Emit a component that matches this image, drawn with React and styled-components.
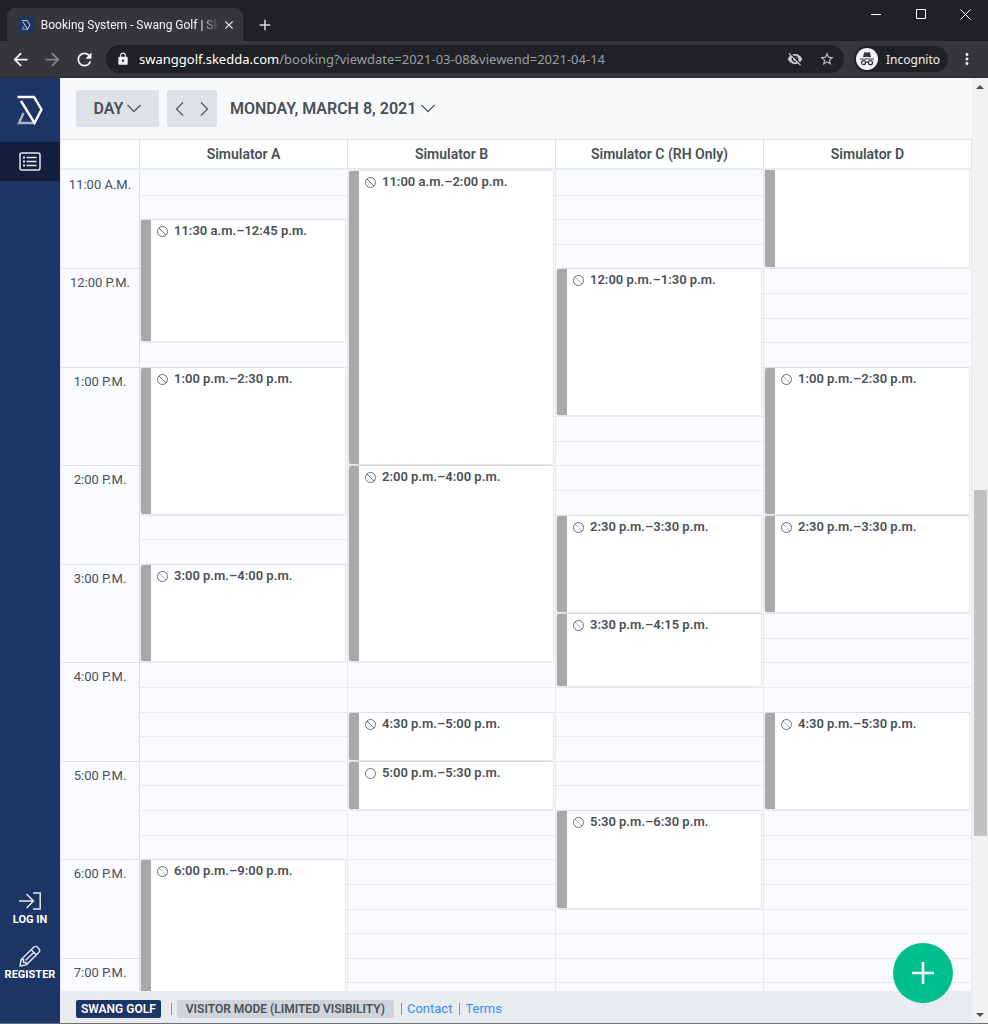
import React, { useState } from 'react'
import styled, { createGlobalStyle } from 'styled-components'
import {
  MdArrowBack,
  MdArrowForward,
  MdRefresh,
  MdLock,
  MdVisibilityOff,
  MdStarBorder,
  MdMoreVert,
  MdClose,
  MdAdd,
} from 'react-icons/md'

/**** Styles ****/
const GlobalStyle = createGlobalStyle`
  * {
    box-sizing: border-box;
  }
  body {
    margin: 0;
    font-family: Roboto, 'Noto Sans', sans-serif;
    font-size: 13px;
    color: #495057;
  }
  button {
    margin: 0;
    padding: 0;
    border: 0;
    background: none;
    font: inherit;
    color: inherit;
    cursor: pointer;
  }
  a {
    text-decoration: none;
  }
  svg {
    display: block;
    flex: none;
  }
`

const Window = styled.div`
  height: 100vh;
  display: flex;
  flex-direction: column;
  overflow: hidden;
  border-bottom: 1px solid #6e6f71;
`

/* browser frame */
const TabStrip = styled.header`
  flex: none;
  display: flex;
  align-items: flex-end;
  height: 41px;
  padding-left: 7px;
  background: #202124;
  color: #dadce0;
`
const Tab = styled.div`
  display: flex;
  align-items: center;
  width: 236px;
  height: 33px;
  padding: 0 5px 0 12px;
  border-radius: 8px 8px 0 0;
  background: #35363a;
  color: #f1f3f4;
`
const Favicon = styled.span`
  display: grid;
  place-items: center;
  width: 16px;
  height: 16px;
  margin-right: 7px;
  background: #1d3564;
`
const TabTitle = styled.span`
  flex: 1;
  white-space: nowrap;
  font-size: 12px;
  line-height: 18px;
  mask-image: linear-gradient(to right, #000 160px, transparent 178px);
`
const TabButton = styled.button`
  display: grid;
  place-items: center;
  width: 20px;
  height: 33px;
`
const NewTab = styled(TabButton)`
  margin-left: 12px;
`
const WindowControls = styled.div`
  display: flex;
  align-self: flex-start;
  margin-left: auto;
`
const WindowButton = styled.button`
  display: grid;
  place-items: center;
  width: 45px;
  height: 28px;
  color: #fff;
`
const BrowserBar = styled.div`
  flex: none;
  display: flex;
  align-items: center;
  height: 37px;
  padding: 0 12px 0 10px;
  background: #35363a;
  border-bottom: 1px solid #2b2c2f;
  color: #f1f3f4;
  font-family: 'Noto Sans', 'Open Sans', sans-serif;
`
const NavButton = styled.button`
  width: 21px;
  height: 21px;
  margin-right: 11px;
  color: ${(props) => (props.$dim ? '#85868a' : '#f1f3f4')};
`
const AddressBar = styled.div`
  flex: 1;
  min-width: 0;
  display: flex;
  align-items: center;
  height: 28px;
  padding: 0 9px 0 10px;
  border-radius: 14px;
  background: #202124;
`
const Url = styled.span`
  flex: 1;
  min-width: 0;
  overflow: hidden;
  margin-left: 9px;
  white-space: nowrap;
  color: #9aa0a6;
`
const Host = styled.span`
  color: #fff;
`
const BarIcon = styled.button`
  margin-left: 16px;
  color: #c5c7ca;
`
const Profile = styled.button`
  display: flex;
  align-items: center;
  gap: 8px;
  height: 26px;
  margin: 0 10px;
  padding: 0 8px 0 2px;
  border-radius: 13px;
  background: #202124;
  font-size: 12px;
`

/* page */
const Page = styled.div`
  flex: 1;
  min-height: 0;
  display: flex;
`
const Sidebar = styled.nav`
  flex: none;
  display: flex;
  flex-direction: column;
  width: 60px;
  padding-bottom: 41px;
  background: #1d3564;
`
const Logo = styled.a`
  display: grid;
  place-items: center;
  height: 64px;
`
const ActiveItem = styled.button`
  display: grid;
  place-items: center;
  height: 39px;
  margin-bottom: auto;
  background: #131f3c;
`
const SideLink = styled.a`
  display: flex;
  flex-direction: column;
  align-items: center;
  gap: 1px;
  margin-top: 18px;
  color: #fff;
  font-size: 11px;
  line-height: 14px;
  font-weight: 700;
`
const Main = styled.main`
  position: relative;
  flex: 1;
  min-width: 0;
  display: flex;
  flex-direction: column;
  border-left: 1px solid #e9ecef;
`
const Toolbar = styled.div`
  flex: none;
  display: flex;
  align-items: center;
  height: 61px;
  padding-left: 15px;
  background: #f8f9fb;
  font-size: 16px;
  font-weight: 600;
`
const ViewButton = styled.button`
  display: flex;
  align-items: center;
  justify-content: center;
  gap: 4px;
  width: 83px;
  height: 37px;
  border-radius: 2px;
  background: #dee2e6;
`
const Pager = styled.div`
  display: flex;
  width: 50px;
  height: 37px;
  margin: 0 13px 0 8px;
  border-radius: 2px;
  background: #dee2e6;
`
const PagerButton = styled.button`
  flex: 1;
  display: grid;
  place-items: center;
`
const DateButton = styled.button`
  display: flex;
  align-items: center;
  gap: 5px;
`
const Columns = styled.div`
  display: grid;
  grid-template-columns: 79px repeat(4, minmax(0, 1fr));
`
const ColumnHeads = styled(Columns)`
  flex: none;
  height: 31px;
  border-top: 1px solid #dee2e6;
  border-bottom: 2px solid #e9ecef;
  background: #fff;
  font-size: 14px;
  line-height: 28px;
  font-weight: 600;
  text-align: center;
`
const ColumnHead = styled.div`
  border-right: 1px solid #dee2e6;
`
const Schedule = styled.div`
  flex: 1;
  min-height: 0;
  overflow: hidden;
  background: #fafbff;
`
const Hours = styled.div`
  display: grid;
  grid-template-rows: repeat(34, minmax(0, 1fr));
  height: 837px;
  border-right: 1px solid #dee2e6;
`
const Hour = styled.div`
  grid-row: ${(props) => props.$row} / span 4;
  padding-top: 6px;
  border-top: 1px solid ${(props) => (props.$row === 1 ? 'transparent' : '#dee2e6')};
  line-height: 16px;
  text-align: center;
`
const Lane = styled(Hours)`
  grid-template-columns: minmax(0, 1fr);
  border-color: #e9ecef;
`
const Slot = styled.div`
  grid-row: ${(props) => props.$row};
  grid-column: 1;
  border-top: 1px solid ${(props) => (props.$row === 1 ? 'transparent' : '#e9ecf0')};
`
const Booking = styled.div`
  grid-row: ${(props) => props.$from} / ${(props) => props.$to};
  grid-column: 1;
  display: flex;
  align-items: flex-start;
  gap: 5px;
  margin: ${(props) => (props.$cut ? '0' : '1px')} 2px 1px 1px;
  padding: 3px 4px 0 5px;
  border-left: 10px solid #a9a9a9;
  border-radius: ${(props) => (props.$cut ? '0 0 2px 2px' : '2px')};
  background: #fff;
  box-shadow: 0 0 2px #b4b8bc;
  line-height: 16px;
  font-weight: 600;
`
const StatusIcon = styled.svg`
  width: 13px;
  height: 13px;
  margin-top: 2px;
  fill: none;
  stroke: #6c7075;
`
const Footer = styled.footer`
  flex: none;
  display: flex;
  align-items: center;
  height: 32px;
  padding: 4px 0 0 15px;
  background: #e9ecef;
  line-height: 18px;
`
const Tag = styled.span`
  padding: 0 9px;
  border-radius: 2px;
  background: #ced4da;
  font-size: 12px;
  font-weight: 600;
`
const VenueTag = styled(Tag)`
  padding: 0 5px;
  background: #1d3564;
  color: #fff;
`
const Divider = styled.span`
  width: 1px;
  height: 12px;
  margin: 0 5px 0 ${(props) => (props.$wide ? '10px' : '7px')};
  background: #868e96;
`
const FooterLink = styled.a`
  color: #3d8bfd;
`
const AddButton = styled.button`
  position: absolute;
  right: 19px;
  bottom: 20px;
  display: grid;
  place-items: center;
  width: 60px;
  height: 60px;
  border-radius: 50%;
  background: #00bf8e;
`
const Scrollbar = styled.div`
  flex: none;
  display: flex;
  flex-direction: column;
  align-items: center;
  width: 16px;
  background: #f1f1f1;
`
const ScrollArrow = styled.button`
  display: grid;
  place-items: center;
  width: 100%;
  height: 17px;
`
const Track = styled.div`
  flex: ${(props) => props.$size} 1 0;
`
const Thumb = styled(Track)`
  width: 13px;
  background: #c1c1c1;
`

/**** Icons ****/
const SkeddaLogo = ({ size }) => (
  <svg width={size} height={size} viewBox="0 0 30 30" fill="none">
    <path d="M8.5 18L4 28h15.5" stroke="#a9b4c9" strokeWidth="2.4" />
    <path d="M2.500 2H19l7.500 12.500-7 13.500L6 6" stroke="#fff" strokeWidth="2.4" />
  </svg>
)

const Chevron = ({ d, width = 14, height = 9 }) => (
  <svg width={width} height={height} viewBox={`0 0 ${width} ${height}`} fill="none" stroke="#555b61" strokeWidth="1.3">
    <path d={d} />
  </svg>
)

const ListIcon = () => (
  <svg width="22" height="19" viewBox="0 0 22 19" fill="none" stroke="#e3e7ee" strokeWidth="1.5">
    <rect x="1" y="1" width="20" height="17" rx="2" />
    <path d="M7.5 5.5h10M7.5 9.5h10M7.5 13.5h10" />
    <path d="M4 5.5h2M4 9.5h2M4 13.5h2" strokeWidth="2" />
  </svg>
)

const LoginIcon = () => (
  <svg width="24" height="22" viewBox="0 -2 24 22" fill="none" stroke="#e3e7ee" strokeWidth="1.5">
    <path d="M1 9h14.5M8.500 2l7 7-7 7M15 1h7.200v16H15" />
  </svg>
)

const PencilIcon = () => (
  <svg width="22" height="22" viewBox="0 0 23 23" fill="none" stroke="#e3e7ee" strokeWidth="1.5" strokeLinejoin="round">
    <path d="M1 22l1.200-6.500L15.500 2.200c1-1 2.600-1 3.600 0l1.700 1.700c1 1 1 2.600 0 3.600L7.500 20.800z" />
    <path d="M12.800 5l5.200 5.200M2.300 15.500h2.500v2.700h2.700v2.500M7 16l8-8" />
  </svg>
)

const IncognitoIcon = () => (
  <svg width="22" height="22" viewBox="0 0 22 22">
    <circle cx="11" cy="11" r="11" fill="#f1f3f4" />
    <path d="M7 9l1.100-4.300c.1-.5.500-.7 1-.5l1.900.5 1.900-.5c.5-.2.900 0 1 .5L15 9z" fill="#35363a" />
    <path d="M4 11h14M9.500 14.500c1-.7 2-.7 3 0" stroke="#35363a" strokeWidth="1.2" fill="none" />
    <circle cx="7.500" cy="14.700" r="2" stroke="#35363a" strokeWidth="1.2" fill="none" />
    <circle cx="14.500" cy="14.700" r="2" stroke="#35363a" strokeWidth="1.2" fill="none" />
  </svg>
)

/**** Variables ****/
const hours = ['11:00 A.M.', '12:00 P.M.', '1:00 P.M.', '2:00 P.M.', '3:00 P.M.', '4:00 P.M.', '5:00 P.M.', '6:00 P.M.', '7:00 P.M.']

// rows are quarter hours, row 1 is 11:00 a.m.
const slots = Array.from({ length: 34 }, (_, key) => key + 1)

const spaces = [
  {
    name: 'Simulator A',
    bookings: [
      { from: 3, to: 8, label: '11:30 a.m.–12:45 p.m.' },
      { from: 9, to: 15, label: '1:00 p.m.–2:30 p.m.' },
      { from: 17, to: 21, label: '3:00 p.m.–4:00 p.m.', slash: 0.5 },
      { from: 29, to: 35, label: '6:00 p.m.–9:00 p.m.', slash: 0.5 },
    ],
  },
  {
    name: 'Simulator B',
    bookings: [
      { from: 1, to: 13, label: '11:00 a.m.–2:00 p.m.' },
      { from: 13, to: 21, label: '2:00 p.m.–4:00 p.m.' },
      { from: 23, to: 25, label: '4:30 p.m.–5:00 p.m.' },
      { from: 25, to: 27, label: '5:00 p.m.–5:30 p.m.', slash: 0 },
    ],
  },
  {
    name: 'Simulator C (RH Only)',
    bookings: [
      { from: 5, to: 11, label: '12:00 p.m.–1:30 p.m.', slash: 0.5 },
      { from: 15, to: 19, label: '2:30 p.m.–3:30 p.m.', slash: 0.5 },
      { from: 19, to: 22, label: '3:30 p.m.–4:15 p.m.', slash: 0.5 },
      { from: 27, to: 31, label: '5:30 p.m.–6:30 p.m.', slash: 0.5 },
    ],
  },
  {
    name: 'Simulator D',
    bookings: [
      { from: 1, to: 5 },
      { from: 9, to: 15, label: '1:00 p.m.–2:30 p.m.', slash: 0.5 },
      { from: 15, to: 19, label: '2:30 p.m.–3:30 p.m.', slash: 0.5 },
      { from: 23, to: 27, label: '4:30 p.m.–5:30 p.m.', slash: 0.5 },
    ],
  },
]

/**** Components ****/
const BookingCard = ({ from, to, label, slash = 1 }) => (
  <Booking $from={from} $to={to} $cut={!label}>
    {label && (
      <>
        <StatusIcon viewBox="0 0 13 13">
          <circle cx="6.5" cy="6.5" r="5" />
          <path d="M3 3l7 7" strokeOpacity={slash} />
        </StatusIcon>
        {label}
      </>
    )}
  </Booking>
)

const Browser = () => (
  <>
    <TabStrip>
      <Tab>
        <Favicon><SkeddaLogo size={10} /></Favicon>
        <TabTitle>Booking System - Swang Golf | Sk</TabTitle>
        <TabButton aria-label="Close tab"><MdClose size={14} /></TabButton>
      </Tab>
      <NewTab aria-label="New tab"><MdAdd size={18} /></NewTab>
      <WindowControls>
        <WindowButton aria-label="Minimize">
          <svg width="10" height="10" stroke="#fff"><path d="M0 5.5h10" /></svg>
        </WindowButton>
        <WindowButton aria-label="Maximize">
          <svg width="10" height="10" stroke="#fff" fill="none"><path d="M.5.5h9v9h-9z" /></svg>
        </WindowButton>
        <WindowButton aria-label="Close">
          <svg width="11" height="11" stroke="#fff"><path d="M.5.5l10 10M10.5.5l-10 10" /></svg>
        </WindowButton>
      </WindowControls>
    </TabStrip>
    <BrowserBar>
      <NavButton aria-label="Back"><MdArrowBack size={21} /></NavButton>
      <NavButton aria-label="Forward" $dim><MdArrowForward size={21} /></NavButton>
      <NavButton aria-label="Reload"><MdRefresh size={21} /></NavButton>
      <AddressBar>
        <MdLock size={14} />
        <Url><Host>swanggolf.skedda.com</Host>/booking?viewdate=2021-03-08&amp;viewend=2021-04-14</Url>
        <BarIcon aria-label="Cookies blocked"><MdVisibilityOff size={16} /></BarIcon>
        <BarIcon aria-label="Bookmark"><MdStarBorder size={16} /></BarIcon>
      </AddressBar>
      <Profile><IncognitoIcon />Incognito</Profile>
      <MdMoreVert size={18} />
    </BrowserBar>
  </>
)

const App = () => {
  const [view] = useState('DAY')

  /**** Render ****/
  return (
    <Window>
      <GlobalStyle />
      <Browser />
      <Page>
        <Sidebar>
          <Logo href="#" aria-label="Skedda"><SkeddaLogo size={30} /></Logo>
          <ActiveItem aria-label="Bookings"><ListIcon /></ActiveItem>
          <SideLink href="#"><LoginIcon />LOG IN</SideLink>
          <SideLink href="#"><PencilIcon />REGISTER</SideLink>
        </Sidebar>
        <Main>
          <Toolbar>
            <ViewButton>{view}<Chevron d="M.5 1L7 7.5 13.5 1" /></ViewButton>
            <Pager>
              <PagerButton aria-label="Previous day"><Chevron width={9} height={14} d="M8 .5L1.5 7 8 13.5" /></PagerButton>
              <PagerButton aria-label="Next day"><Chevron width={9} height={14} d="M1 .5L7.5 7 1 13.5" /></PagerButton>
            </Pager>
            <DateButton>MONDAY, MARCH 8, 2021<Chevron d="M.5 1L7 7.5 13.5 1" /></DateButton>
          </Toolbar>
          <ColumnHeads>
            <ColumnHead />
            {spaces.map((space) => <ColumnHead key={space.name}>{space.name}</ColumnHead>)}
          </ColumnHeads>
          <Schedule>
            <Columns>
              <Hours>
                {hours.map((hour, key) => <Hour key={hour} $row={key * 4 + 1}>{hour}</Hour>)}
              </Hours>
              {spaces.map((space) => (
                <Lane key={space.name}>
                  {slots.map((row) => <Slot key={row} $row={row} />)}
                  {space.bookings.map((booking) => <BookingCard key={booking.from} {...booking} />)}
                </Lane>
              ))}
            </Columns>
          </Schedule>
          <Footer>
            <VenueTag>SWANG GOLF</VenueTag>
            <Divider $wide />
            <Tag>VISITOR MODE (LIMITED VISIBILITY)</Tag>
            <Divider />
            <FooterLink href="#">Contact</FooterLink>
            <Divider />
            <FooterLink href="#">Terms</FooterLink>
          </Footer>
          <AddButton aria-label="Add booking">
            <svg width="22" height="22" stroke="#fff" strokeWidth="2.5"><path d="M11 0v22M0 11h22" /></svg>
          </AddButton>
        </Main>
        <Scrollbar>
          <ScrollArrow aria-label="Scroll up">
            <svg width="8" height="4" fill="#505050"><path d="M0 4l4-4 4 4z" /></svg>
          </ScrollArrow>
          <Track $size={395} />
          <Thumb $size={346} />
          <Track $size={170} />
          <ScrollArrow aria-label="Scroll down">
            <svg width="8" height="4" fill="#505050"><path d="M0 0l4 4 4-4z" /></svg>
          </ScrollArrow>
        </Scrollbar>
      </Page>
    </Window>
  )
}

export default App
